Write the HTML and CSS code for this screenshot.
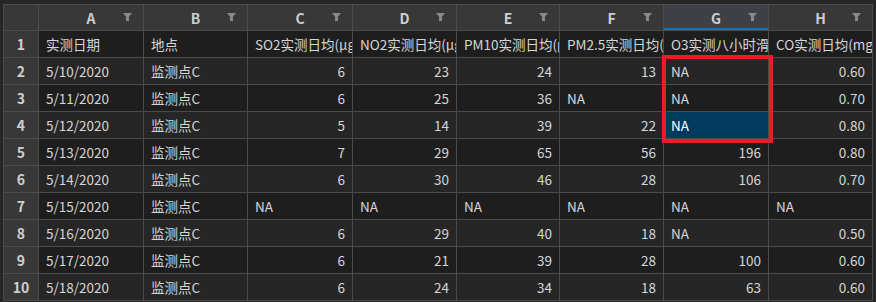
FILE: index.html
```html
<!DOCTYPE html>
<html lang="zh">
<head>
    <meta charset="UTF-8">
    <meta name="viewport" content="width=device-width, initial-scale=1.0">
    <title>监测数据</title>
    <link rel="stylesheet" href="styles.css">
</head>
<body>
    <div class="sheet" id="sheet"></div>
    <div class="mark"></div>

    <script>
        const cols = ['A', 'B', 'C', 'D', 'E', 'F', 'G', 'H'];
        const head = ['实测日期', '地点', 'SO2实测日均(μg/m³)', 'NO2实测日均(μg/m³)', 'PM10实测日均(μg/m³)', 'PM2.5实测日均(μg/m³)', 'O3实测八小时滑动平均(μg/m³)', 'CO实测日均(mg/m³)'];
        const rows = [
            ['5/10/2020', '监测点C', 6, 23, 24, 13, 'NA', '0.60'],
            ['5/11/2020', '监测点C', 6, 25, 36, 'NA', 'NA', '0.70'],
            ['5/12/2020', '监测点C', 5, 14, 39, 22, 'NA', '0.80'],
            ['5/13/2020', '监测点C', 7, 29, 65, 56, 196, '0.80'],
            ['5/14/2020', '监测点C', 6, 30, 46, 28, 106, '0.70'],
            ['5/15/2020', '监测点C', 'NA', 'NA', 'NA', 'NA', 'NA', 'NA'],
            ['5/16/2020', '监测点C', 6, 29, 40, 18, 'NA', '0.50'],
            ['5/17/2020', '监测点C', 6, 21, 39, 28, 100, '0.60'],
            ['5/18/2020', '监测点C', 6, 24, 34, 18, 63, '0.60']
        ];
        const funnel = '<svg class="filter" width="9" height="8" viewBox="0 0 9 8"><path d="M0 0H9L6 3.5V8H3V3.5Z"/></svg>';

        const sheet = document.getElementById('sheet');
        let html = '<div class="row head"><div class="rn"></div>';
        cols.forEach(c => {
            html += `<div class="hd${c === 'G' ? ' active' : ''}">${c}${funnel}</div>`;
        });
        html += '</div>';

        [head, ...rows].forEach((r, i) => {
            html += `<div class="row ${i % 2 ? 'even' : 'odd'}"><div class="rn">${i + 1}</div>`;
            r.forEach((v, j) => {
                const isNum = i > 0 && v !== 'NA' && j > 1;
                const sel = i === 3 && j === 6 ? ' sel' : '';
                html += `<div class="c${isNum ? ' num' : ''}${sel}"><span>${v}</span></div>`;
            });
            html += '</div>';
        });
        sheet.innerHTML = html;
    </script>
</body>
</html>
```

FILE: styles.css
```css
body {
    margin: 0;
    padding: 4px 0 0 3px;
    background-color: #262626;
    font-family: "Noto Sans CJK SC", "Noto Sans", sans-serif;
    font-size: 13.5px;
    color: #d6d6d6;
    position: relative;
    height: 302px;
    box-sizing: border-box;
    overflow: hidden;
}

.sheet {
    display: flex;
    flex-direction: column;
    gap: 1px;
    width: max-content;
    padding: 1px;
    background-color: #4b4b4b;
}

.row {
    display: grid;
    grid-template-columns: 34px 104px 103px 104px 103px 102px 103px 104px 103px;
    gap: 1px;
    height: 26px;
}

.row.head {
    height: 25px;
}

.rn, .hd {
    background-color: #383838;
    color: #cfcfcf;
    font-weight: bold;
    font-size: 14px;
    display: flex;
    align-items: center;
    justify-content: center;
}

.hd {
    position: relative;
}

.hd.active {
    background-color: #3d4047;
    box-shadow: inset 0 -2px 0 #1f6fae;
}

.filter {
    position: absolute;
    right: 11px;
    top: 8px;
    fill: #8a8a8a;
}

.c {
    display: flex;
    align-items: center;
    padding-left: 7px;
    white-space: nowrap;
    overflow: hidden;
}

.odd .c { background-color: #1e1e1e; }
.even .c { background-color: #262626; }

.c.num {
    justify-content: flex-end;
    padding-left: 0;
    padding-right: 7px;
}

.c.sel {
    background-color: #003a60;
    color: #ffffff;
}

.mark {
    position: absolute;
    left: 662px;
    top: 55px;
    width: 111px;
    height: 88px;
    border: 4px solid #e51f27;
    box-sizing: border-box;
}
```
